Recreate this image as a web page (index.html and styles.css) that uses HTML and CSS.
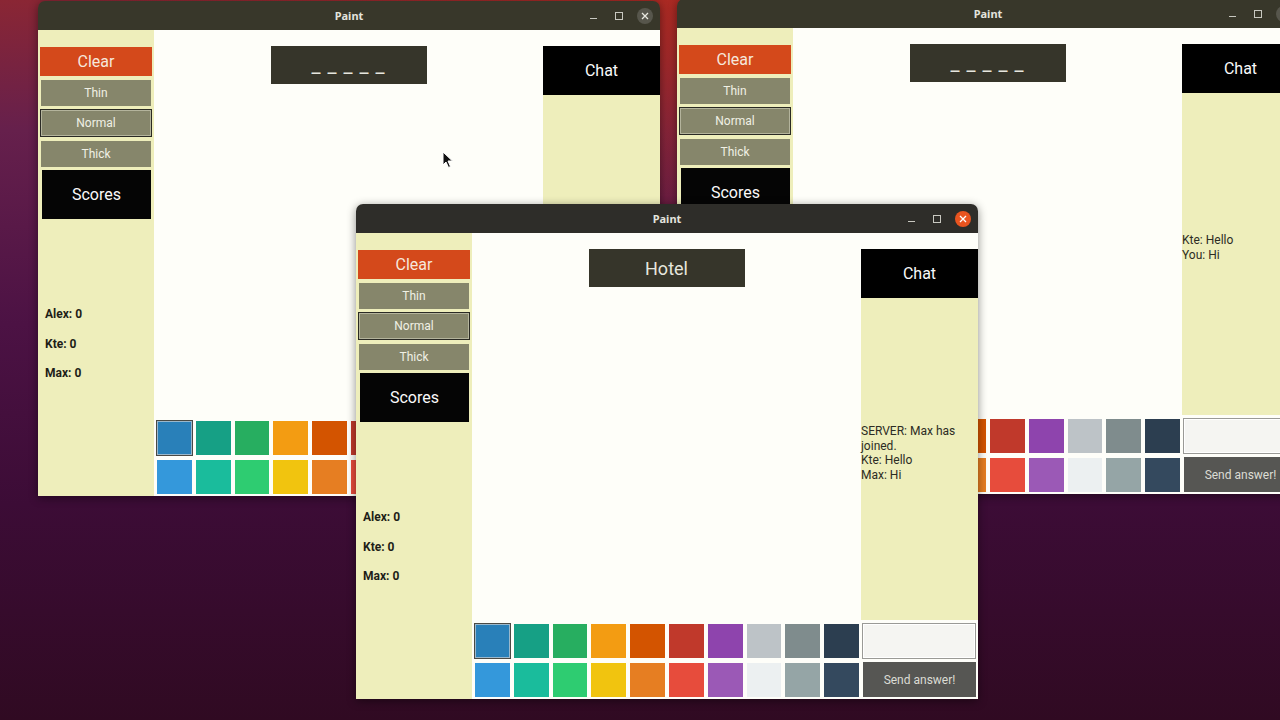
FILE: index.html
```html
<!DOCTYPE html>
<html lang="en">
<head>
    <meta charset="UTF-8">
    <title>Paint</title>
    <link rel="stylesheet" href="styles.css">
</head>
<body>
    <div class="desktop">

        <!-- back left window -->
        <div class="window win-a">
            <div class="titlebar">
                Paint
                <div class="controls">
                    <span class="ctl-min"></span>
                    <span class="ctl-max"></span>
                    <span class="ctl-close"><svg width="8" height="8" viewBox="0 0 8 8"><path d="M1 1 L7 7 M7 1 L1 7" stroke="currentColor" stroke-width="1.3"/></svg></span>
                </div>
            </div>
            <div class="content">
                <div class="side">
                    <div class="btn-clear">Clear</div>
                    <div class="btn-size">Thin</div>
                    <div class="btn-size active">Normal</div>
                    <div class="btn-size">Thick</div>
                    <div class="scores-head">Scores</div>
                    <div class="score-list">
                        <div>Alex: 0</div>
                        <div>Kte: 0</div>
                        <div>Max: 0</div>
                    </div>
                </div>
                <div class="canvas">
                    <div class="word blanks">_ _ _ _ _</div>
                    <div class="palette">
                        <div class="sw c1 selected"></div><div class="sw c2"></div><div class="sw c3"></div><div class="sw c4"></div><div class="sw c5"></div>
                        <div class="sw c6"></div><div class="sw c7"></div><div class="sw c8"></div><div class="sw c9"></div><div class="sw c10"></div>
                        <div class="sw c11"></div><div class="sw c12"></div><div class="sw c13"></div><div class="sw c14"></div><div class="sw c15"></div>
                        <div class="sw c16"></div><div class="sw c17"></div><div class="sw c18"></div><div class="sw c19"></div><div class="sw c20"></div>
                    </div>
                </div>
                <div class="chat">
                    <div class="chat-head">Chat</div>
                    <div class="chat-log"></div>
                    <div class="chat-bottom">
                        <div class="answer-input"></div>
                        <div class="send">Send answer!</div>
                    </div>
                </div>
            </div>
        </div>

        <!-- back right window -->
        <div class="window win-c">
            <div class="titlebar">
                Paint
                <div class="controls">
                    <span class="ctl-min"></span>
                    <span class="ctl-max"></span>
                    <span class="ctl-close"><svg width="8" height="8" viewBox="0 0 8 8"><path d="M1 1 L7 7 M7 1 L1 7" stroke="currentColor" stroke-width="1.3"/></svg></span>
                </div>
            </div>
            <div class="content">
                <div class="side">
                    <div class="btn-clear">Clear</div>
                    <div class="btn-size">Thin</div>
                    <div class="btn-size active">Normal</div>
                    <div class="btn-size">Thick</div>
                    <div class="scores-head">Scores</div>
                    <div class="score-list">
                        <div>Alex: 0</div>
                        <div>Kte: 0</div>
                        <div>Max: 0</div>
                    </div>
                </div>
                <div class="canvas">
                    <div class="word blanks">_ _ _ _ _</div>
                    <div class="palette">
                        <div class="sw c1 selected"></div><div class="sw c2"></div><div class="sw c3"></div><div class="sw c4"></div><div class="sw c5"></div>
                        <div class="sw c6"></div><div class="sw c7"></div><div class="sw c8"></div><div class="sw c9"></div><div class="sw c10"></div>
                        <div class="sw c11"></div><div class="sw c12"></div><div class="sw c13"></div><div class="sw c14"></div><div class="sw c15"></div>
                        <div class="sw c16"></div><div class="sw c17"></div><div class="sw c18"></div><div class="sw c19"></div><div class="sw c20"></div>
                    </div>
                </div>
                <div class="chat">
                    <div class="chat-head">Chat</div>
                    <div class="chat-log log-short">
                        Kte: Hello<br>
                        You: Hi
                    </div>
                    <div class="chat-bottom">
                        <div class="answer-input"></div>
                        <div class="send">Send answer!</div>
                    </div>
                </div>
            </div>
        </div>

        <!-- front window -->
        <div class="window win-b">
            <div class="titlebar focused">
                Paint
                <div class="controls">
                    <span class="ctl-min"></span>
                    <span class="ctl-max"></span>
                    <span class="ctl-close"><svg width="8" height="8" viewBox="0 0 8 8"><path d="M1 1 L7 7 M7 1 L1 7" stroke="currentColor" stroke-width="1.3"/></svg></span>
                </div>
            </div>
            <div class="content">
                <div class="side">
                    <div class="btn-clear">Clear</div>
                    <div class="btn-size">Thin</div>
                    <div class="btn-size active">Normal</div>
                    <div class="btn-size">Thick</div>
                    <div class="scores-head">Scores</div>
                    <div class="score-list">
                        <div>Alex: 0</div>
                        <div>Kte: 0</div>
                        <div>Max: 0</div>
                    </div>
                </div>
                <div class="canvas">
                    <div class="word">Hotel</div>
                    <div class="palette">
                        <div class="sw c1 selected"></div><div class="sw c2"></div><div class="sw c3"></div><div class="sw c4"></div><div class="sw c5"></div>
                        <div class="sw c6"></div><div class="sw c7"></div><div class="sw c8"></div><div class="sw c9"></div><div class="sw c10"></div>
                        <div class="sw c11"></div><div class="sw c12"></div><div class="sw c13"></div><div class="sw c14"></div><div class="sw c15"></div>
                        <div class="sw c16"></div><div class="sw c17"></div><div class="sw c18"></div><div class="sw c19"></div><div class="sw c20"></div>
                    </div>
                </div>
                <div class="chat">
                    <div class="chat-head">Chat</div>
                    <div class="chat-log">
                        SERVER: Max has<br>
                        joined.<br>
                        Kte: Hello<br>
                        Max: Hi
                    </div>
                    <div class="chat-bottom">
                        <div class="answer-input"></div>
                        <div class="send">Send answer!</div>
                    </div>
                </div>
            </div>
        </div>

        <!-- mouse pointer -->
        <svg class="pointer" width="12" height="18" viewBox="0 0 12 18">
            <path d="M1 1 L1 14 L4 11 L6.5 16.5 L8.5 15.5 L6 10 L10.5 10 Z" fill="#111" stroke="#fff" stroke-width="1"/>
        </svg>
    </div>
</body>
</html>
```

FILE: styles.css
```css
body {
    margin: 0;
    font-family: Roboto, "Liberation Sans", sans-serif;
}

.desktop {
    position: relative;
    width: 1280px;
    height: 720px;
    overflow: hidden;
    background:
        radial-gradient(ellipse 45% 35% at 52% 0%, rgba(172, 42, 34, 0.95), rgba(172, 42, 34, 0) 100%),
        linear-gradient(180deg, #8a2634 0%, #66204c 18%, #4c1244 45%, #3c0c36 70%, #300a22 100%);
}

/* windows on the desktop */
.window {
    position: absolute;
    width: 622px;
    display: flex;
    flex-direction: column;
    box-shadow: 0 2px 10px rgba(0, 0, 0, 0.45);
    border-radius: 7px 7px 0 0;
}

.win-a {
    left: 38px;
    top: 1px;
}

.win-c {
    left: 677px;
    top: -1px;
}

.win-b {
    left: 356px;
    top: 204px;
}

.titlebar {
    position: relative;
    height: 29px;
    background-color: #38372a;
    color: #e4e4de;
    font-family: "Noto Sans", "DejaVu Sans", sans-serif;
    font-weight: 700;
    font-size: 11px;
    display: flex;
    align-items: center;
    justify-content: center;
    border-radius: 7px 7px 0 0;
}

.titlebar.focused {
    background-color: #2e2d29;
}

.controls {
    position: absolute;
    right: 7px;
    top: 0;
    height: 29px;
    display: flex;
    align-items: center;
    gap: 10px;
}

.controls span {
    width: 16px;
    height: 16px;
    display: flex;
    align-items: center;
    justify-content: center;
}

.ctl-min::before {
    content: "";
    width: 7px;
    height: 1px;
    margin-top: 5px;
    background-color: #c8c8c0;
}

.ctl-max::before {
    content: "";
    width: 6px;
    height: 6px;
    border: 1px solid #c8c8c0;
}

.ctl-close {
    border-radius: 50%;
    background-color: #57564c;
    color: #e8e8e0;
}

.focused .ctl-close {
    background-color: #e9541f;
    color: #fff;
}

.content {
    height: 466px;
    display: grid;
    grid-template-columns: 116px 1fr 117px;
}

/* left column */
.side {
    background-color: #eeeebb;
    padding: 17px 2px 0;
    display: flex;
    flex-direction: column;
}

.btn-clear {
    height: 29px;
    background-color: #d4491b;
    color: #f6e8dc;
    font-size: 16px;
    display: flex;
    align-items: center;
    justify-content: center;
}

.btn-size {
    height: 26px;
    margin: 4px 1px 0;
    background-color: #86866b;
    color: #f0f0e4;
    font-size: 12px;
    display: flex;
    align-items: center;
    justify-content: center;
}

.btn-size.active {
    height: 28px;
    margin: 3px 0 0;
    border: 1px solid #2a2a24;
    box-shadow: inset 0 0 0 1px #b4b49c;
    box-sizing: border-box;
}

.btn-size.active + .btn-size {
    margin-top: 4px;
}

.scores-head {
    height: 49px;
    margin: 3px 1px 0 2px;
    background-color: #050505;
    color: #fafafa;
    font-size: 16px;
    display: flex;
    align-items: center;
    justify-content: center;
}

.score-list {
    margin-top: 88px;
    padding-left: 5px;
    display: flex;
    flex-direction: column;
    gap: 15.5px;
    font-size: 12px;
    font-weight: 700;
    line-height: 14px;
    color: #1e1e18;
}

/* drawing area */
.canvas {
    background-color: #fefef9;
    display: flex;
    flex-direction: column;
    align-items: center;
}

.word {
    margin-top: 16px;
    width: 156px;
    height: 38px;
    background-color: #36352a;
    color: #e6e6de;
    font-size: 18px;
    display: flex;
    align-items: center;
    justify-content: center;
}

.word.blanks {
    font-size: 20px;
    letter-spacing: 1px;
    box-sizing: border-box;
}

.palette {
    margin-top: auto;
    align-self: stretch;
    display: grid;
    grid-template-columns: repeat(10, 1fr);
    grid-auto-rows: 34px;
    gap: 5px 4px;
    padding: 0 2px 2px 3px;
}

.sw.selected {
    box-shadow: 0 0 0 1px #4a4a44, inset 0 0 0 1px #9ab8cc;
}

.c1 { background-color: #2980b9; }
.c2 { background-color: #16a085; }
.c3 { background-color: #27ae60; }
.c4 { background-color: #f39c12; }
.c5 { background-color: #d35400; }
.c6 { background-color: #c0392b; }
.c7 { background-color: #8e44ad; }
.c8 { background-color: #bdc3c7; }
.c9 { background-color: #7f8c8d; }
.c10 { background-color: #2c3e50; }
.c11 { background-color: #3498db; }
.c12 { background-color: #1abc9c; }
.c13 { background-color: #2ecc71; }
.c14 { background-color: #f1c40f; }
.c15 { background-color: #e67e22; }
.c16 { background-color: #e74c3c; }
.c17 { background-color: #9b59b6; }
.c18 { background-color: #ecf0f1; }
.c19 { background-color: #95a5a6; }
.c20 { background-color: #34495e; }

/* chat column */
.chat {
    background-color: #fefef9;
    padding-top: 16px;
    display: flex;
    flex-direction: column;
}

.chat-head {
    height: 49px;
    background-color: #000;
    color: #fafafa;
    font-size: 16px;
    display: flex;
    align-items: center;
    justify-content: center;
}

.chat-log {
    flex: 1;
    background-color: #eeeebb;
    padding-top: 126px;
    font-size: 12px;
    line-height: 14.5px;
    color: #2c2c24;
}

.chat-log.log-short {
    padding-top: 140px;
}

.chat-bottom {
    padding: 3px 2px 2px 1px;
    display: flex;
    flex-direction: column;
    gap: 3px;
}

.answer-input {
    height: 36px;
    background-color: #f5f5f2;
    border: 1px solid #9a9a96;
    box-shadow: inset 0 0 0 1px #fff;
    box-sizing: border-box;
}

.send {
    height: 35px;
    margin-left: 1px;
    background-color: #565653;
    color: #dcdcd4;
    font-size: 12px;
    display: flex;
    align-items: center;
    justify-content: center;
}

.pointer {
    position: absolute;
    left: 442px;
    top: 151px;
}
```
